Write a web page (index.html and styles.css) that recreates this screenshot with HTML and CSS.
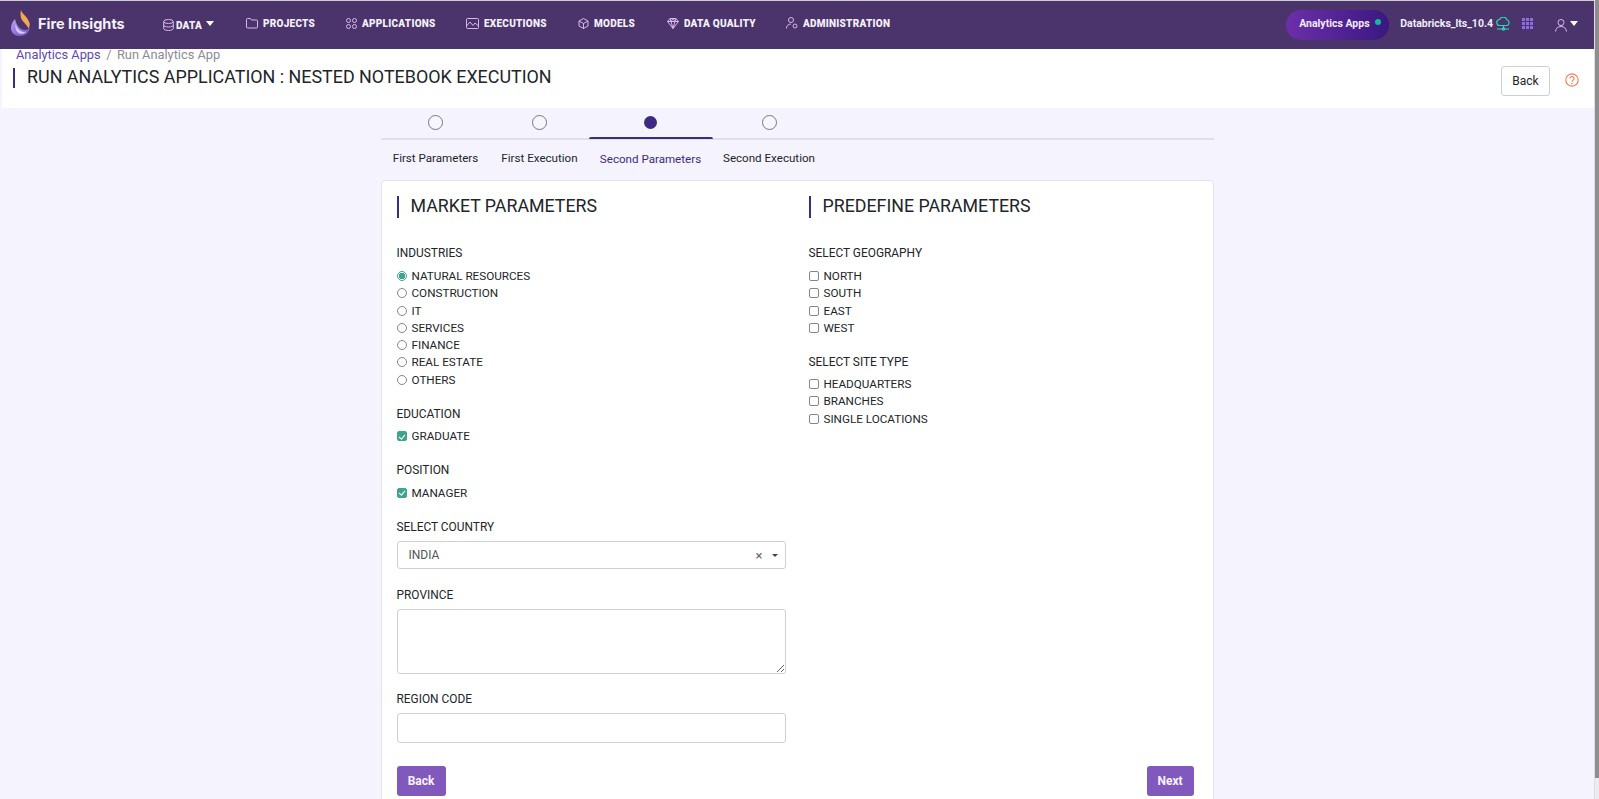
FILE: index.html
```html
<!DOCTYPE html>
<html lang="en">
<head>
    <meta charset="UTF-8">
    <meta name="viewport" content="width=device-width, initial-scale=1.0">
    <title>Fire Insights</title>
    <link rel="stylesheet" href="styles.css">
</head>
<body>
<div id="app">
    <div id="page">
        <nav class="navbar">
            <a class="brand">
                <svg class="brand-logo" width="24" height="27" viewBox="0 0 24 27">
                    <defs>
                        <linearGradient id="flameTop" x1="0" y1="0" x2="0" y2="1"><stop offset="0" stop-color="#f6a93b"/><stop offset="1" stop-color="#eda765"/></linearGradient>
                        <linearGradient id="flameBottom" x1="0" y1="0" x2="1" y2="1"><stop offset="0" stop-color="#b9a0f4"/><stop offset="1" stop-color="#6a4fc8"/></linearGradient>
                    </defs>
                    <path d="M11 0c1 4 7 7 8.500 13 .5 2 0 4-1 5.500-1.500-3.500-4.500-5.500-6.500-8.500-1.500-2.500-2-6-1-10z" fill="url(#flameTop)"/>
                    <path d="M5 9c-3 3-4 6-4 9 0 5 4 8 9 8s9.500-3 9.500-8c-1.500 2-4.500 2.500-7 1.500C8.500 18 6 14 5 9z" fill="url(#flameBottom)"/>
                    <path d="M5.500 14c1 3.500 3.500 6.500 6.500 7.500 1.500.5 3 .5 4.500 0-2 2.500-5.500 3-8 1.500C6 21.500 5 18 5.500 14z" fill="#d6c8fa"/>
                </svg>
                <span class="brand-name">Fire Insights</span>
            </a>
            <ul class="nav-links">
                <li class="nav-item nav-data">
                    <svg class="nav-icon" width="11" height="12" viewBox="0 0 11 12"><ellipse cx="5.500" cy="2.500" rx="4.800" ry="2"/><path d="M.7 2.500v7c0 1.100 2.100 2 4.800 2s4.800-.9 4.800-2v-7M.7 6c0 1.100 2.100 2 4.800 2s4.800-.9 4.800-2"/></svg>
                    <span>Data</span><span class="caret"></span>
                </li>
                <li class="nav-item nav-projects">
                    <svg class="nav-icon" width="12" height="11" viewBox="0 0 12 11"><path d="M.5 1.500a1 1 0 0 1 1-1h3l1 1.500h5a1 1 0 0 1 1 1v6a1 1 0 0 1-1 1h-9a1 1 0 0 1-1-1z"/></svg>
                    <span>Projects</span>
                </li>
                <li class="nav-item nav-apps">
                    <svg class="nav-icon" width="11" height="11" viewBox="0 0 11 11"><circle cx="2.500" cy="2.500" r="2"/><circle cx="8.500" cy="2.500" r="2"/><circle cx="2.500" cy="8.500" r="2"/><circle cx="8.500" cy="8.500" r="2"/></svg>
                    <span>Applications</span>
                </li>
                <li class="nav-item nav-exec">
                    <svg class="nav-icon" width="13" height="11" viewBox="0 0 13 11"><rect x=".5" y=".5" width="12" height="10" rx="1"/><path d="M.5 8l3.500-4 3 3.500L9 5l3.500 3"/></svg>
                    <span>Executions</span>
                </li>
                <li class="nav-item nav-models">
                    <svg class="nav-icon" width="11" height="11" viewBox="0 0 11 11"><path d="M5.500.5l4.500 2.500v5l-4.500 2.500L1 8V3zM1 3l4.500 2.500L10 3M5.500 5.500v5"/></svg>
                    <span>Models</span>
                </li>
                <li class="nav-item nav-quality">
                    <svg class="nav-icon" width="12" height="11" viewBox="0 0 12 11"><path d="M3 .5h6l2.500 3L6 10.500.5 3.500zM.5 3.500h11M4 3.500l2 7 2-7M3 .5l1 3 2-3 2 3 1-3"/></svg>
                    <span>Data Quality</span>
                </li>
                <li class="nav-item nav-admin">
                    <svg class="nav-icon" width="12" height="12" viewBox="0 0 12 12"><circle cx="5" cy="3" r="2.500"/><path d="M.5 11.500c0-3 2-4.500 4.500-4.500"/><circle cx="9" cy="9" r="2"/></svg>
                    <span>Administration</span>
                </li>
            </ul>
            <div class="nav-right">
                <div class="app-pill"><span class="pill-text">Analytics Apps</span><span class="pill-dot"></span></div>
                <span class="cluster-name">Databricks_lts_10.4</span>
                <svg class="cluster-icon" width="15" height="14" viewBox="0 0 15 14"><path d="M4 8.500a3 3 0 0 1-.4-6A4 4 0 0 1 11 2.800a3 3 0 0 1 0 5.700zM7.500 8.500v3M1 12h12"/><circle cx="7.500" cy="12" r="1.200"/></svg>
                <svg class="grid-icon" width="11" height="11" viewBox="0 0 11 11">
                    <rect x="0" y="0" width="3" height="3"/><rect x="4" y="0" width="3" height="3"/><rect x="8" y="0" width="3" height="3"/>
                    <rect x="0" y="4" width="3" height="3"/><rect x="4" y="4" width="3" height="3"/><rect x="8" y="4" width="3" height="3"/>
                    <rect x="0" y="8" width="3" height="3"/><rect x="4" y="8" width="3" height="3"/><rect x="8" y="8" width="3" height="3"/>
                </svg>
                <svg class="user-icon" width="12" height="13" viewBox="0 0 12 13"><circle cx="6" cy="3.500" r="3"/><path d="M.5 12.500c.5-3.500 2.500-5 5.500-5s5 1.500 5.500 5"/></svg>
                <span class="caret user-caret"></span>
            </div>
        </nav>

        <header class="page-header">
            <div class="page-header-left">
                <div class="breadcrumb"><a>Analytics Apps</a><span class="crumb-sep">/</span><span>Run Analytics App</span></div>
                <h1 class="page-title">Run Analytics Application : Nested Notebook Execution</h1>
            </div>
            <button class="btn-outline">Back</button>
            <svg class="help-icon" width="14" height="14" viewBox="0 0 14 14"><circle cx="7" cy="7" r="6.200"/><path d="M5 5.400a2 2 0 1 1 3 1.800c-.7.400-1 .8-1 1.600"/><circle class="help-dot" cx="7" cy="10.600" r=".8"/></svg>
        </header>

        <main class="wizard">
            <div class="steps">
                <div class="step step-1"><span class="step-dot"></span><span class="step-label">First Parameters</span></div>
                <div class="step step-2"><span class="step-dot"></span><span class="step-label">First Execution</span></div>
                <div class="step step-3 active"><span class="step-dot"></span><span class="step-label">Second Parameters</span></div>
                <div class="step step-4"><span class="step-dot"></span><span class="step-label">Second Execution</span></div>
            </div>

            <section class="card">
                <div class="form-cols">
                    <div class="form-col">
                        <h2 class="section-title">Market Parameters</h2>
                        <div class="form-group">
                            <div class="form-label">Industries</div>
                            <div class="option"><span class="radio checked"></span>Natural Resources</div>
                            <div class="option"><span class="radio"></span>Construction</div>
                            <div class="option"><span class="radio"></span>IT</div>
                            <div class="option"><span class="radio"></span>Services</div>
                            <div class="option"><span class="radio"></span>Finance</div>
                            <div class="option"><span class="radio"></span>Real Estate</div>
                            <div class="option"><span class="radio"></span>Others</div>
                        </div>
                        <div class="form-group single">
                            <div class="form-label">Education</div>
                            <div class="option"><span class="check checked"></span>Graduate</div>
                        </div>
                        <div class="form-group single">
                            <div class="form-label">Position</div>
                            <div class="option"><span class="check checked"></span>Manager</div>
                        </div>
                        <div class="form-group">
                            <div class="form-label">Select Country</div>
                            <div class="select-box">
                                <span class="select-value">India</span>
                                <span class="select-clear">×</span>
                                <span class="select-arrow"></span>
                            </div>
                        </div>
                        <div class="form-group group-textarea">
                            <div class="form-label">Province</div>
                            <textarea class="text-area"></textarea>
                        </div>
                        <div class="form-group">
                            <div class="form-label">Region Code</div>
                            <input class="text-input" type="text">
                        </div>
                    </div>
                    <div class="form-col">
                        <h2 class="section-title">Predefine Parameters</h2>
                        <div class="form-group">
                            <div class="form-label">Select Geography</div>
                            <div class="option"><span class="check"></span>North</div>
                            <div class="option"><span class="check"></span>South</div>
                            <div class="option"><span class="check"></span>East</div>
                            <div class="option"><span class="check"></span>West</div>
                        </div>
                        <div class="form-group">
                            <div class="form-label form-label-tight">Select Site Type</div>
                            <div class="option"><span class="check"></span>Headquarters</div>
                            <div class="option"><span class="check"></span>Branches</div>
                            <div class="option"><span class="check"></span>Single Locations</div>
                        </div>
                    </div>
                </div>
                <div class="form-actions">
                    <button class="btn-primary btn-back">Back</button>
                    <button class="btn-primary btn-next">Next</button>
                </div>
            </section>
        </main>
    </div>
    <div class="scrollbar"><div class="scrollbar-thumb"></div></div>
</div>
</body>
</html>
```

FILE: styles.css
```css
html, body {
    margin: 0;
    padding: 0;
    height: 100%;
    overflow: hidden;
    background: #f5f3fe;
    font-family: Roboto, "Liberation Sans", sans-serif;
    color: #212529;
}
#app {
    display: flex;
    height: 100vh;
}
#page {
    flex: 1;
    min-width: 0;
    overflow: hidden;
}

/* scrollbar strip on the right */
.scrollbar {
    width: 4px;
    background: #ececf0;
    border-left: 1px solid #dcdce2;
}
.scrollbar-thumb {
    height: 778px;
    background: #8e8e8e;
}

/* top nav */
.navbar {
    display: flex;
    align-items: center;
    box-sizing: content-box;
    height: 44px;
    padding-bottom: 4px;
    background: #4a346b;
    border-top: 1px solid #cfcfcf;
}
.brand {
    display: flex;
    align-items: center;
    margin-left: 10px;
    width: 153px;
    flex: none;
}
.brand-name {
    margin-left: 4px;
    font-family: Inter, sans-serif;
    font-size: 14.500px;
    font-weight: 700;
    color: #f4f1fb;
}
.nav-links {
    display: flex;
    list-style: none;
    margin: 0;
    padding: 0;
}
.nav-item {
    display: flex;
    align-items: center;
    font-size: 10px;
    font-weight: 900;
    letter-spacing: .25px;
    text-transform: uppercase;
    color: #f3effa;
}
.nav-icon {
    fill: none;
    stroke: #d9b8ea;
    stroke-width: 1;
    margin-right: 5px;
}
.nav-data { width: 83px; padding-top: 4px; }
.nav-data .nav-icon { margin-right: 2px; }
.nav-data .caret { margin: -3px 0 0 4px; }
.nav-projects { width: 100px; }
.nav-apps { width: 120px; }
.nav-exec { width: 112px; }
.nav-models { width: 89px; }
.nav-quality { width: 119px; }
.caret {
    display: inline-block;
    width: 0;
    height: 0;
    margin-left: 5px;
    border-left: 4.500px solid transparent;
    border-right: 4.500px solid transparent;
    border-top: 5px solid #fff;
}
.nav-right {
    display: flex;
    align-items: center;
    margin-left: auto;
    margin-right: 16px;
    margin-bottom: -4px;
}
.app-pill {
    display: flex;
    align-items: center;
    box-sizing: border-box;
    width: 103px;
    height: 30px;
    padding-left: 13px;
    border-radius: 15px;
    background: linear-gradient(to right, #6c2fa9, #3a1880);
    font-size: 10.500px;
    font-weight: 700;
    color: #f1ecfa;
}
.pill-text {
    margin-top: -3px;
}
.pill-dot {
    width: 6px;
    height: 6px;
    margin: -6px 0 0 5px;
    border-radius: 50%;
    background: #14b8a0;
}
.cluster-name {
    margin: -4px 0 0 11px;
    font-size: 10.500px;
    font-weight: 700;
    color: #f1ecfa;
}
.cluster-icon {
    margin: -3px 0 0 3px;
    fill: none;
    stroke: #2fd8b4;
    stroke-width: 1.200;
}
.grid-icon {
    margin: -4px 0 0 11px;
    fill: #8f6ce6;
}
.user-icon {
    margin-left: 22px;
    fill: none;
    stroke: #d9b8ea;
    stroke-width: 1;
}
.user-caret {
    margin: -4px 0 0 3px;
}

/* page header */
.page-header {
    display: flex;
    align-items: flex-start;
    height: 59px;
    margin-left: 2px;
    background: #fff;
}
.page-header-left {
    flex: 1;
}
.breadcrumb {
    margin-top: -1px;
    margin-left: 14px;
    height: 14px;
    line-height: 13px;
    font-size: 12.800px;
    color: #8b8b94;
}
.breadcrumb a {
    color: #5b4bb0;
}
.crumb-sep {
    margin: 0 5.500px;
}
.page-title {
    margin: 6px 0 0 11px;
    padding-left: 12px;
    border-left: 2px solid #3c2a84;
    height: 20px;
    line-height: 17px;
    font-size: 17.900px;
    font-weight: 400;
    text-transform: uppercase;
    color: #212529;
}
.btn-outline {
    width: 49px;
    height: 30px;
    margin-top: 17px;
    padding: 0;
    background: #fff;
    border: 1px solid #ccd0d8;
    border-radius: 3px;
    font-family: inherit;
    font-size: 12px;
    color: #212529;
}
.help-icon {
    margin: 24px 15px 0 15px;
    fill: none;
    stroke: #f0835a;
    stroke-width: 1.200;
}
.help-dot {
    fill: #f0835a;
    stroke: none;
}

/* wizard */
.wizard {
    width: 833px;
    margin: 0 auto;
}
.steps {
    display: flex;
    height: 72px;
    background: linear-gradient(#dfe0ea, #dfe0ea) 0 30px / 100% 2px no-repeat;
}
.step {
    display: flex;
    flex-direction: column;
    align-items: center;
    position: relative;
}
.step-1 { width: 110px; }
.step-2 { width: 98px; }
.step-3 { width: 124px; }
.step-4 { width: 113px; }
.step-dot {
    box-sizing: border-box;
    width: 15px;
    height: 15px;
    margin-top: 7px;
    border: 1px solid #77777f;
    border-radius: 50%;
    background: #f7f6ff;
}
.step-label {
    margin-top: 21px;
    font-size: 11.600px;
    line-height: 14px;
    color: #212529;
}
.step.active .step-dot {
    width: 13px;
    height: 13px;
    margin-top: 8px;
    margin-bottom: 1px;
    border: 0;
    background: #3c2a84;
}
.step.active .step-label {
    color: #3c2a84;
    margin-top: 22px;
}
.step.active::after {
    content: "";
    position: absolute;
    left: 0;
    right: 0;
    top: 29px;
    height: 2px;
    border-radius: 2px 2px 0 0;
    background: #3c2a84;
}

/* form card */
.card {
    box-sizing: border-box;
    padding: 15px 19px 30px 15px;
    background: #fff;
    border: 1px solid #e3e3ec;
    border-radius: 4px;
}
.form-cols {
    display: grid;
    grid-template-columns: 389px 1fr;
    column-gap: 23px;
}
.section-title {
    margin: 0 0 28px;
    padding-left: 12px;
    height: 22px;
    line-height: 20px;
    border-left: 2px solid #3c2a84;
    font-size: 17.800px;
    font-weight: 400;
    text-transform: uppercase;
    color: #212529;
}
.form-group {
    margin-bottom: 18.500px;
}
.group-textarea {
    margin-bottom: 17.500px;
}
.form-label {
    height: 14px;
    line-height: 14px;
    margin-bottom: 7.300px;
    font-size: 11.900px;
    text-transform: uppercase;
}
.form-group.single .form-label {
    margin-bottom: 6.800px;
}
.form-label-tight {
    margin-bottom: 6.300px;
}
.option {
    display: flex;
    align-items: center;
    height: 17.300px;
    font-size: 11.700px;
    text-transform: uppercase;
}
.radio, .check {
    box-sizing: border-box;
    flex: none;
    width: 10px;
    height: 10px;
    margin-right: 5px;
    border: 1px solid #85858c;
    background: #fff;
}
.radio {
    border-radius: 50%;
}
.check {
    border-radius: 2px;
    position: relative;
}
.radio.checked {
    border-color: #3fa58a;
    background: radial-gradient(circle, #3fa58a 0 3px, #fff 3.500px);
}
.check.checked {
    border-color: #3fa58a;
    background: #3fa58a;
}
.check.checked::after {
    content: "";
    position: absolute;
    left: 2.500px;
    top: .5px;
    width: 2.500px;
    height: 5px;
    border: solid #fff;
    border-width: 0 1.500px 1.500px 0;
    transform: rotate(40deg);
}
.select-box {
    display: flex;
    align-items: center;
    box-sizing: border-box;
    height: 28px;
    padding: 0 7px 0 11px;
    border: 1px solid #cdd0da;
    border-radius: 3px;
    font-size: 12px;
    text-transform: uppercase;
    color: #555;
}
.select-value {
    flex: 1;
}
.select-clear {
    font-size: 13px;
    color: #666;
}
.select-arrow {
    width: 0;
    height: 0;
    margin-left: 9px;
    border-left: 3px solid transparent;
    border-right: 3px solid transparent;
    border-top: 3px solid #444;
}
.text-area, .text-input {
    display: block;
    box-sizing: border-box;
    width: 100%;
    margin: 0;
    padding: 4px 8px;
    background: #fff;
    border: 1px solid #cdd0da;
    border-radius: 3px;
    font-family: inherit;
    font-size: 12px;
    outline: none;
}
.text-area {
    height: 65px;
    resize: vertical;
}
.text-input {
    height: 30px;
}
.form-actions {
    display: flex;
    justify-content: space-between;
    margin-top: 4.500px;
}
.btn-primary {
    height: 30px;
    padding: 0;
    background: #8159bd;
    border: 0;
    border-radius: 3px;
    font-family: inherit;
    font-size: 12px;
    font-weight: 700;
    color: #f7f3fc;
}
.btn-back { width: 49px; }
.btn-next { width: 47px; }
```
